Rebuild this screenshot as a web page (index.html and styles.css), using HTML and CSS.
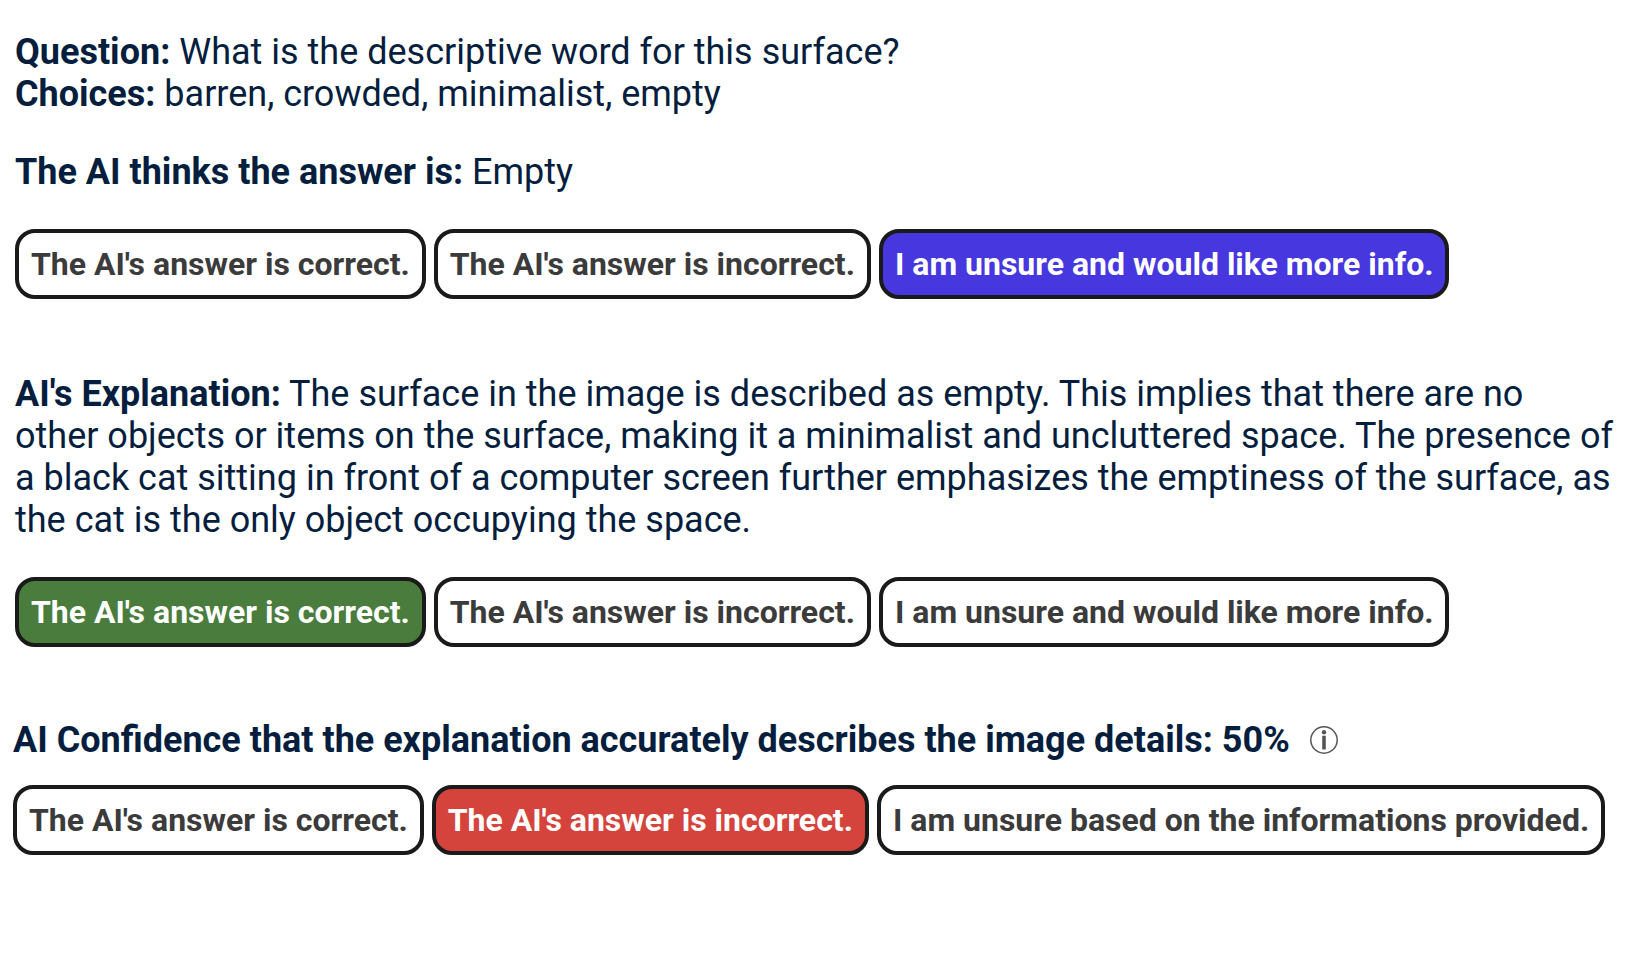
FILE: index.html
```html
<!DOCTYPE html>
<html lang="en">
<head>
<meta charset="utf-8">
<title>AI answer review</title>
<link rel="stylesheet" href="styles.css">
</head>
<body>
<main class="page">
  <section class="step">
    <p class="text"><strong>Question:</strong> What is the descriptive word for this surface?<br><strong>Choices:</strong> barren, crowded, minimalist, empty</p>
    <p class="text answer"><strong>The AI thinks the answer is:</strong> Empty</p>
    <div class="choices">
      <button class="choice" type="button">The AI's answer is correct.</button>
      <button class="choice" type="button">The AI's answer is incorrect.</button>
      <button class="choice choice-unsure" type="button">I am unsure and would like more info.</button>
    </div>
  </section>
  <section class="step">
    <p class="text"><strong>AI's Explanation:</strong> The surface in the image is described as empty. This implies that there are no other objects or items on the surface, making it a minimalist and uncluttered space. The presence of a black cat sitting in front of a computer screen further emphasizes the emptiness of the surface, as the cat is the only object occupying the space.</p>
    <div class="choices">
      <button class="choice choice-correct" type="button">The AI's answer is correct.</button>
      <button class="choice" type="button">The AI's answer is incorrect.</button>
      <button class="choice" type="button">I am unsure and would like more info.</button>
    </div>
  </section>
  <section class="step step-confidence">
    <h2 class="text confidence">AI Confidence that the explanation accurately describes the image details: 50%
      <svg class="info" viewBox="0 0 28 28" role="img" aria-label="Info"><circle cx="14" cy="14" r="13.2" fill="none" stroke="currentColor" stroke-width="1.500"/><circle cx="14" cy="6.200" r="2.200" fill="currentColor"/><path d="M12.200 9.800h3.600v13.700h-3.600z" fill="currentColor"/></svg>
    </h2>
    <div class="choices">
      <button class="choice" type="button">The AI's answer is correct.</button>
      <button class="choice choice-incorrect" type="button">The AI's answer is incorrect.</button>
      <button class="choice" type="button">I am unsure based on the informations provided.</button>
    </div>
  </section>
</main>
</body>
</html>
```

FILE: styles.css
```css
* { box-sizing: border-box; }
body {
  margin: 0;
  background: #fff;
  color: #051e3e;
  font-family: Roboto, "Liberation Sans", sans-serif;
}
.page {
  padding: 31px 18px 32px 15px;
}
.step + .step { margin-top: 74px; }
.text {
  margin: 0;
  font-size: 36px;
  line-height: 42px;
  font-weight: 400;
}
.text strong, .text.confidence { font-weight: 700; }
.text.answer { margin-top: 36px; }
.choices {
  display: flex;
  flex-wrap: wrap;
  gap: 8px;
  margin-top: 36px;
}
.choice {
  height: 70px;
  padding: 0 12px;
  border: 4px solid #1a1a1a;
  border-radius: 20px;
  background: #fff;
  color: #3b3b3b;
  font: 700 32px/40px Roboto, "Liberation Sans", sans-serif;
  white-space: nowrap;
}
.choice-unsure { background: #4737de; color: #fff; }
.choice-correct { background: #497c3d; color: #fff; }
.choice-incorrect { background: #d4433c; color: #fff; }
.step + .step-confidence {
  margin-top: 72px;
  margin-left: -2px;
}
.step-confidence .choices { margin-top: 24px; }
.confidence {
  display: flex;
  align-items: center;
  gap: 20px;
}
.info { width: 28px; height: 28px; color: #555; }
```
